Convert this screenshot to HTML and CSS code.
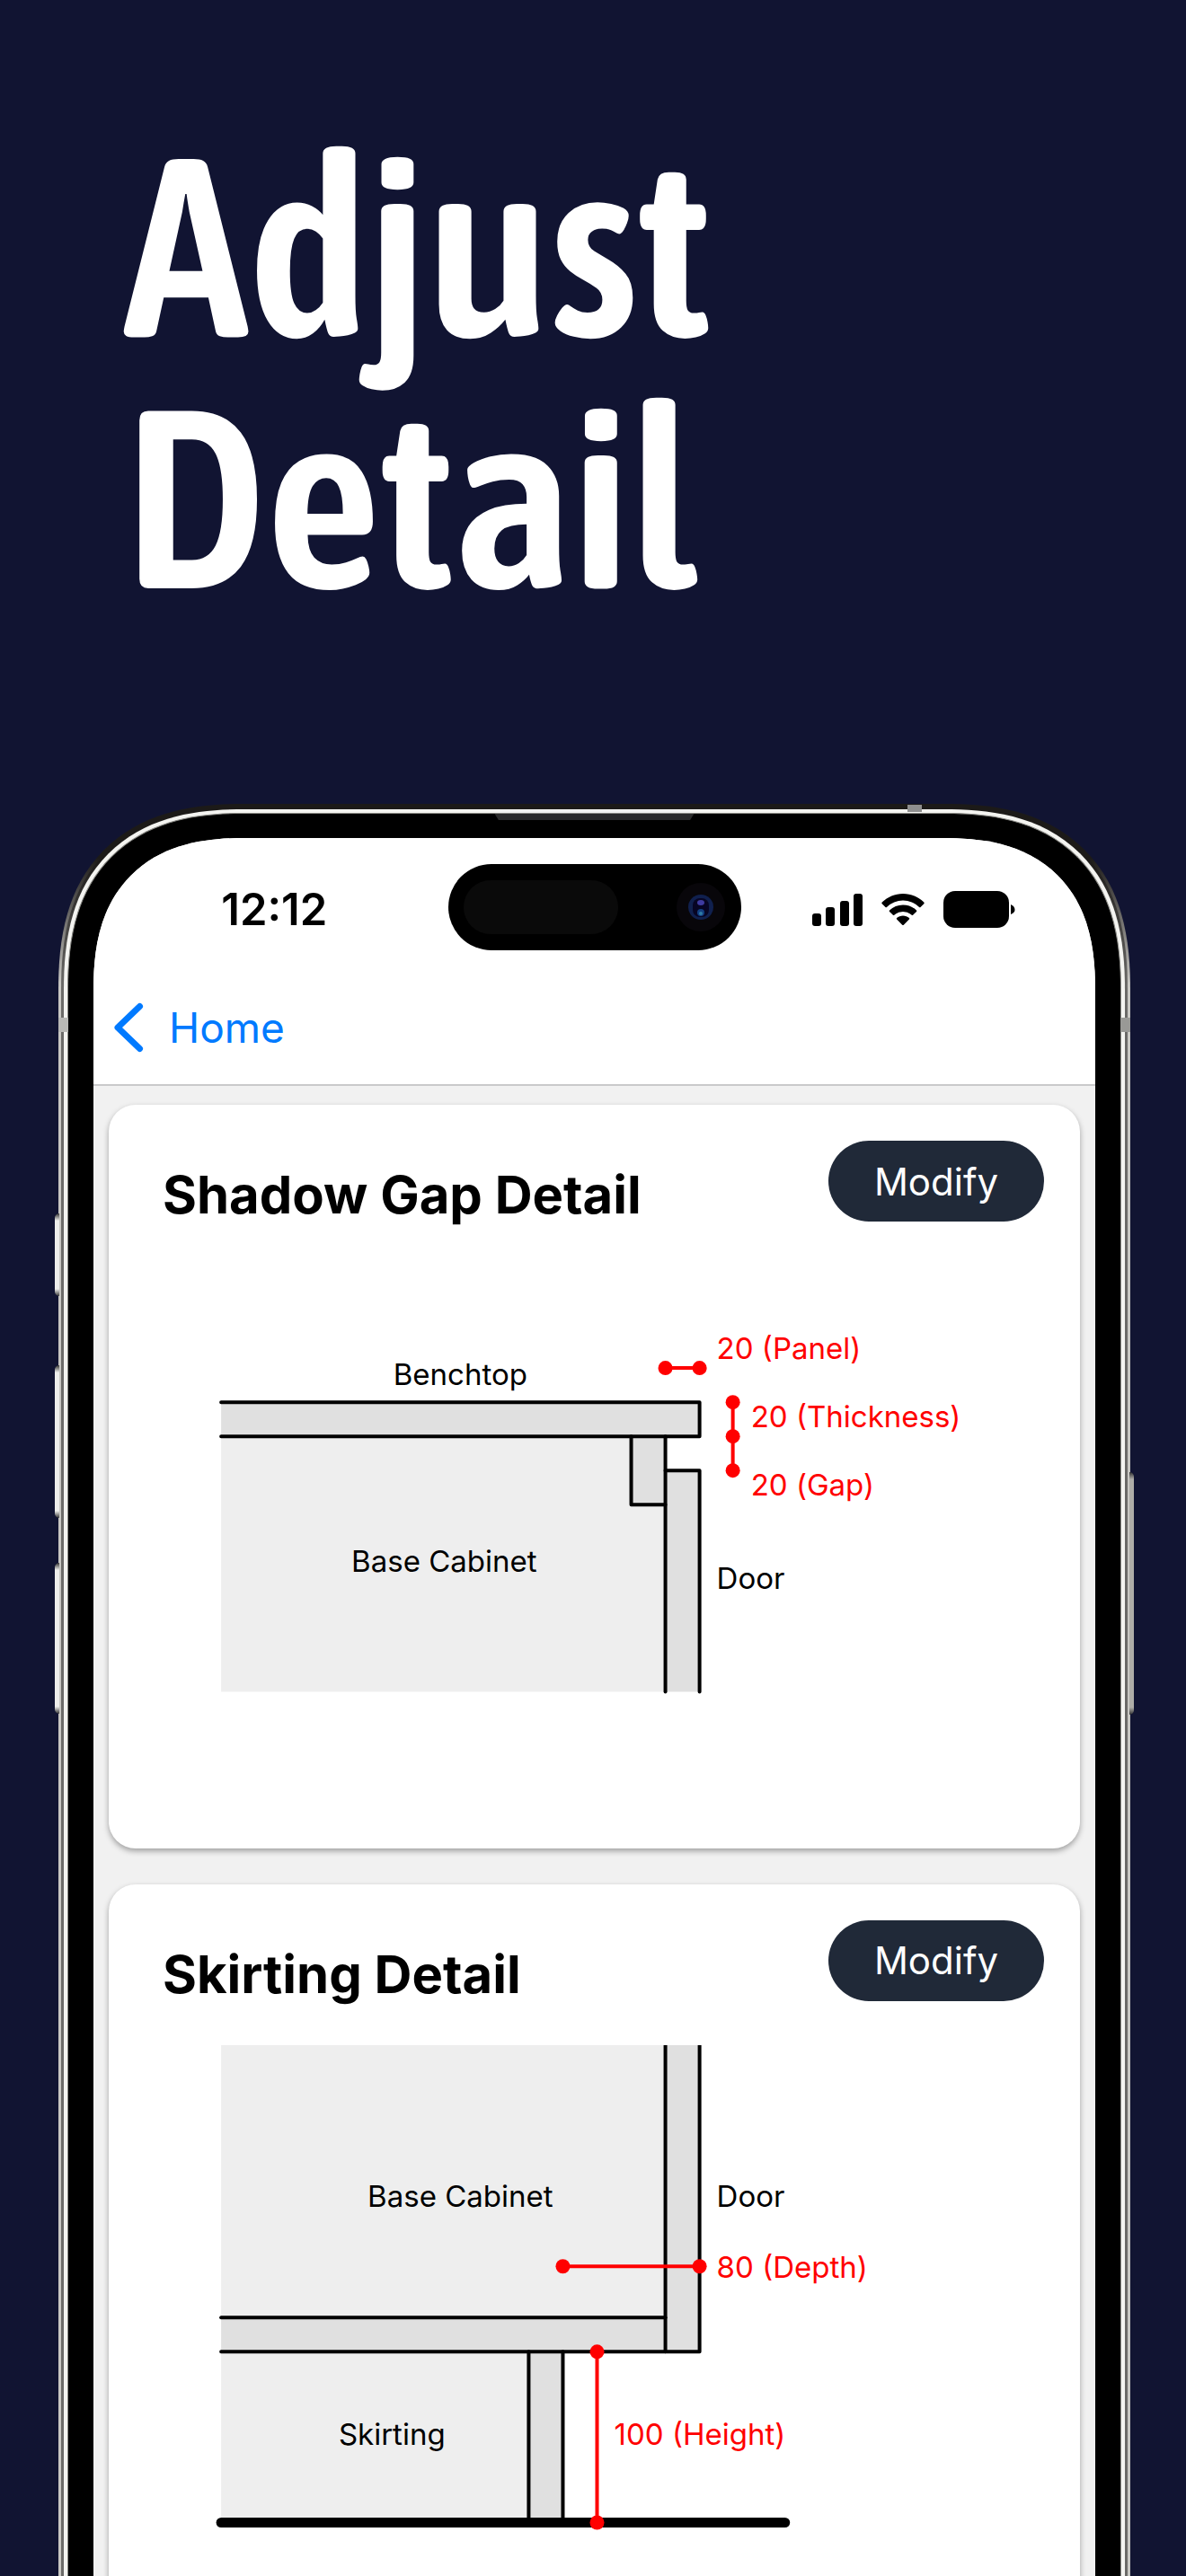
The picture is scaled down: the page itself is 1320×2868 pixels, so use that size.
FILE: index.html
```html
<!DOCTYPE html>
<html lang="en">
<head>
    <meta charset="UTF-8">
    <meta name="viewport" content="width=device-width, initial-scale=1.0">
    <title>Adjust Detail</title>
    <link rel="stylesheet" href="styles.css">
</head>
<body>
    <header class="hero">
        <h1>Adjust<br>Detail</h1>
    </header>

    <div class="phone">
        <!-- Hardware buttons and antenna bands -->
        <span class="key key-action"></span>
        <span class="key key-up"></span>
        <span class="key key-down"></span>
        <span class="key key-power"></span>
        <div class="rim-dark">
            <div class="rim-light">
                <div class="bezel">
                    <span class="speaker"></span>
                    <div class="screen">
                        <div class="status-bar">
                            <span class="time">12:12</span>
                            <div class="island">
                                <span class="sensor"></span>
                                <svg class="camera" width="56" height="56" viewBox="0 0 56 56" aria-hidden="true">
                                    <circle cx="28" cy="28" r="27" fill="#08060a"/>
                                    <circle cx="28" cy="28" r="14" fill="#10204e"/>
                                    <rect x="19" y="18" width="18" height="21" rx="8" fill="#070524"/>
                                    <ellipse cx="28" cy="23" rx="4" ry="3" fill="#3f3ba0"/>
                                    <circle cx="28" cy="34" r="4" fill="#123f82"/>
                                    <circle cx="28" cy="35" r="2" fill="#2f7ba5"/>
                                </svg>
                            </div>
                            <div class="indicators">
                                <svg width="56" height="36" viewBox="0 0 56 36" aria-label="Signal">
                                    <rect x="0" y="22" width="10" height="14" rx="3"/>
                                    <rect x="15" y="15" width="10" height="21" rx="3"/>
                                    <rect x="31" y="8" width="10" height="28" rx="3"/>
                                    <rect x="46" y="0" width="10" height="36" rx="3"/>
                                </svg>
                                <svg width="48" height="36" viewBox="0 0 48 36" aria-label="Wi-Fi">
                                    <path d="M24 0C33 0 41 3.500 47.300 9.600Q48 10.400 47.300 11.200L43.500 14.900Q42.800 15.500 42.100 14.900A26 26 0 0 0 5.900 14.900Q5.200 15.500 4.500 14.900L.7 11.200Q0 10.400 .7 9.600C7 3.500 15 0 24 0Z"/>
                                    <path d="M24 12.400C29.800 12.400 35 14.600 39 18.400Q39.700 19.200 39 19.900L35.100 23.700Q34.400 24.300 33.700 23.700A14.500 14.500 0 0 0 14.300 23.700Q13.600 24.300 12.900 23.700L9 19.900Q8.300 19.200 9 18.400C13 14.600 18.200 12.400 24 12.400Z"/>
                                    <path d="M24 24.500C26.700 24.500 29 25.500 30.900 27.100Q31.600 27.900 30.900 28.600L24.800 34.700Q24 35.400 23.200 34.700L17.100 28.600Q16.400 27.900 17.100 27.100C19 25.500 21.300 24.500 24 24.500Z"/>
                                </svg>
                                <svg width="80" height="42" viewBox="0 0 80 42" aria-label="Battery">
                                    <rect x="0" y="0" width="73" height="41" rx="13"/>
                                    <path d="M75 15Q79.500 17 79.500 21Q79.500 24 75 26Z"/>
                                </svg>
                            </div>
                        </div>

                        <nav class="nav-bar">
                            <a href="#home" class="back">
                                <svg width="34" height="56" viewBox="0 0 34 56" aria-hidden="true">
                                    <path d="M29.500 4.500L5 28L29.500 51.500" fill="none" stroke="#007aff" stroke-width="7" stroke-linecap="round" stroke-linejoin="round"/>
                                </svg>
                                Home
                            </a>
                        </nav>

                        <main class="cards">
                            <section class="card">
                                <div class="card-header">
                                    <h2>Shadow Gap Detail</h2>
                                    <button type="button" class="modify">Modify</button>
                                </div>
                                <svg class="diagram" viewBox="0 0 1080 648">
                                    <path class="cabinet" d="M125 190H619V474H125Z"/>
                                    <path class="panel" d="M125 152H657V190H125Z"/>
                                    <path class="panel" d="M581 190H619V266H581Z"/>
                                    <path class="panel" d="M619 228H657V474H619Z"/>
                                    <path class="edge" d="M125 152H657V190H125"/>
                                    <path class="edge" d="M581 190V266H619"/>
                                    <path class="edge" d="M619 190V474"/>
                                    <path class="edge" d="M619 228H657V474"/>

                                    <path class="dimension" d="M619 114H657M694 152V228"/>
                                    <circle class="dot" cx="619" cy="114" r="8"/>
                                    <circle class="dot" cx="657" cy="114" r="8"/>
                                    <circle class="dot" cx="694" cy="152" r="8"/>
                                    <circle class="dot" cx="694" cy="190" r="8"/>
                                    <circle class="dot" cx="694" cy="228" r="8"/>

                                    <text class="centered" x="391" y="133">Benchtop</text>
                                    <text class="centered" x="373" y="341">Base Cabinet</text>
                                    <text x="676" y="360">Door</text>
                                    <text class="value" x="676" y="104">20 (Panel)</text>
                                    <text class="value" x="714" y="180">20 (Thickness)</text>
                                    <text class="value" x="714" y="256">20 (Gap)</text>
                                </svg>
                            </section>

                            <section class="card">
                                <div class="card-header">
                                    <h2>Skirting Detail</h2>
                                    <button type="button" class="modify">Modify</button>
                                </div>
                                <svg class="diagram" viewBox="0 0 1080 648">
                                    <path class="cabinet" d="M125 0H619V303H125Z"/>
                                    <path class="cabinet" d="M125 341H467V531H125Z"/>
                                    <path class="panel" d="M125 303H619V341H125Z"/>
                                    <path class="panel" d="M619 0H657V341H619Z"/>
                                    <path class="panel" d="M467 341H505V531H467Z"/>
                                    <path class="edge" d="M125 303H619"/>
                                    <path class="edge" d="M619 -4V341"/>
                                    <path class="edge" d="M657 -4V341H125"/>
                                    <path class="edge" d="M467 341V531M505 341V531"/>
                                    <path class="floor" d="M125 531H752"/>

                                    <path class="dimension" d="M505 246H657M543 341V531"/>
                                    <circle class="dot" cx="505" cy="246" r="8"/>
                                    <circle class="dot" cx="657" cy="246" r="8"/>
                                    <circle class="dot" cx="543" cy="341" r="8"/>
                                    <circle class="dot" cx="543" cy="531" r="8"/>

                                    <text class="centered" x="391" y="180">Base Cabinet</text>
                                    <text x="676" y="180">Door</text>
                                    <text class="centered" x="315" y="445">Skirting</text>
                                    <text class="value" x="676" y="259">80 (Depth)</text>
                                    <text class="value" x="562" y="445">100 (Height)</text>
                                </svg>
                            </section>
                        </main>
                    </div>
                </div>
            </div>
        </div>
        <span class="band band-top"></span>
        <span class="band band-left"></span>
        <span class="band band-right"></span>
    </div>
</body>
</html>
```

FILE: styles.css
```css
* {
    box-sizing: border-box;
}

body {
    margin: 0;
    height: 100vh;
    display: flex;
    flex-direction: column;
    overflow: hidden;
    background: #111432;
    color: #000;
    font-family: Inter, "Noto Sans", sans-serif;
}

.hero {
    height: 895px;
    flex: none;
    padding: 134px 138px 0;
}

.hero h1 {
    margin: 0;
    color: #fff;
    font-family: "Asap Condensed", "Liberation Sans Narrow", "Open Sans", sans-serif;
    font-size: 282px;
    font-weight: 600;
    line-height: 280px;
}

/* Phone shell, each layer is one band of the metal frame */
.phone {
    position: relative;
    flex: 1;
    min-height: 0;
    display: flex;
    margin: 0 62px 0 65px;
    padding: 3px 3px 0;
    border-radius: 178px 178px 0 0;
    background: linear-gradient(#1c1a18 60px, #c8c7c3 200px);
}

.rim-dark,
.rim-light,
.bezel {
    flex: 1;
    min-width: 0;
    display: flex;
}

.rim-dark {
    padding: 3px 3px 0;
    border-radius: 175px 175px 0 0;
    background: linear-gradient(#1c1a18 60px, #6b6a68 200px);
}

.rim-light {
    padding: 4px 4px 0;
    border-radius: 172px 172px 0 0;
    background: #f4f4f1;
}

.bezel {
    position: relative;
    padding: 27px 28px 0;
    border: 1px solid #8a8a86;
    border-bottom: 0;
    border-radius: 168px 168px 0 0;
    background: #000;
}

.speaker {
    position: absolute;
    top: 0;
    left: 50%;
    width: 222px;
    height: 7px;
    margin-left: -111px;
    background: #2b2b2b;
    clip-path: polygon(0 0, 100% 0, 98% 100%, 2% 100%);
}

.key {
    position: absolute;
    left: -4px;
    width: 5px;
    border-radius: 5px 0 0 5px;
    background: linear-gradient(#333, #eeeeeb 8px, #eeeeeb calc(100% - 8px), #333);
}

.key-action {
    top: 456px;
    height: 92px;
}

.key-up {
    top: 625px;
    height: 170px;
}

.key-down {
    top: 845px;
    height: 168px;
}

.key-power {
    top: 744px;
    left: auto;
    right: -4px;
    height: 270px;
    border-radius: 0 5px 5px 0;
    background: linear-gradient(#333, #aeada8 8px, #aeada8 calc(100% - 8px), #333);
}

.band {
    position: absolute;
    background: #b9b9b6;
}

.band-top {
    top: 1px;
    right: 232px;
    width: 16px;
    height: 8px;
    background: #8e8e8e;
}

.band-left,
.band-right {
    top: 238px;
    width: 11px;
    height: 16px;
}

.band-left {
    left: 0;
}

.band-right {
    right: 0;
    background: #999996;
}

.screen {
    flex: 1;
    min-width: 0;
    overflow: hidden;
    border-radius: 146px 146px 0 0;
    background: #f1f1f1;
}

/* Continuous corners where the browser can draw them */
@supports (corner-shape: superellipse(1.3)) {
    .phone,
    .rim-dark,
    .rim-light,
    .bezel,
    .screen {
        corner-shape: superellipse(1.3);
    }

    .phone {
        border-radius: 208px 208px 0 0;
    }

    .rim-dark {
        border-radius: 205px 205px 0 0;
    }

    .rim-light {
        border-radius: 202px 202px 0 0;
    }

    .bezel {
        border-radius: 198px 198px 0 0;
    }

    .screen {
        border-radius: 170px 170px 0 0;
    }
}

.status-bar {
    display: grid;
    grid-template-columns: 1fr 326px 1fr;
    align-items: center;
    padding: 29px 0 23px;
    background: #fff;
}

.time {
    padding: 6px 0 0 8px;
    text-align: center;
    font-size: 49px;
    font-weight: 600;
    line-height: 60px;
}

.island {
    display: flex;
    align-items: center;
    justify-content: space-between;
    height: 96px;
    padding: 0 17px;
    border-radius: 48px;
    background: #000;
}

.sensor {
    width: 172px;
    height: 60px;
    border-radius: 30px;
    background: #0a0a0a;
}

.indicators {
    display: flex;
    align-items: center;
    justify-content: center;
    gap: 21px;
    padding: 6px 10px 0 0;
}

.nav-bar {
    display: flex;
    align-items: center;
    height: 128px;
    padding-left: 22px;
    border-bottom: 2px solid #c9c9cb;
    background: #fff;
}

.back {
    display: flex;
    align-items: center;
    gap: 28px;
    color: #007aff;
    font-size: 46px;
    line-height: 56px;
    text-decoration: none;
}

.cards {
    display: flex;
    flex-direction: column;
    gap: 40px;
    padding: 21px 17px;
}

.card {
    border-radius: 30px;
    background: #fff;
    box-shadow: 0 3px 6px rgba(0, 0, 0, 0.34);
}

.card-header {
    display: flex;
    align-items: flex-start;
    justify-content: space-between;
    padding: 40px 40px 19px 60px;
}

.card-header h2 {
    margin: 0;
    font-size: 58px;
    font-weight: 700;
    line-height: 120px;
}

.modify {
    width: 240px;
    height: 90px;
    border: 0;
    border-radius: 45px;
    background: #202938;
    color: #fff;
    font-family: inherit;
    font-size: 42px;
    cursor: pointer;
}

.diagram {
    display: block;
    width: 100%;
}

.diagram text {
    font-size: 33px;
}

.diagram .centered {
    text-anchor: middle;
}

.diagram .value,
.dot {
    fill: #f00;
}

.cabinet {
    fill: #eee;
}

.panel {
    fill: #e0e0e0;
}

.edge,
.dimension,
.floor {
    fill: none;
    stroke: #000;
    stroke-width: 4;
    stroke-linecap: round;
    stroke-linejoin: round;
}

.dimension {
    stroke: #f00;
}

.floor {
    stroke-width: 11;
}
```
